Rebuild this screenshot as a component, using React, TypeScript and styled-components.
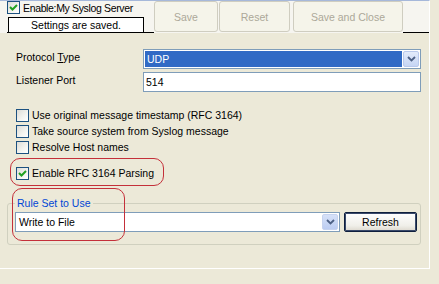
import React from 'react';
import styled, { createGlobalStyle } from 'styled-components';

const GlobalStyle = createGlobalStyle`
  html, body {
    margin: 0;
    background: #ece9d8;
    font-family: "Liberation Sans", Arial, sans-serif;
    font-size: 10.5px;
    color: #000;
  }
`;

const Panel = styled.div`
  width: 430px;
  height: 269px;
  box-sizing: border-box;
  border-top: 1px solid #a6b8da;
  border-right: 1px solid #fff;
  border-bottom: 1px solid #fff;
  display: flex;
  flex-direction: column;
`;

const Header = styled.div`
  display: flex;
  align-items: flex-start;
  height: 32px;
  background: #f6f5f0;
`;

const HeaderLeft = styled.div`
  margin-left: 7px;
  width: 147px;
  height: 32px;
  box-sizing: border-box;
  border-bottom: 1px solid #000;
`;

const HeaderFill = styled.div`
  flex: 1;
  height: 32px;
  box-sizing: border-box;
  border-bottom: 1px solid #000;
`;

const StatusBox = styled.div`
  margin: 3px 0 0 1px;
  width: 136px;
  height: 15px;
  box-sizing: border-box;
  border: 1px solid #000;
  border-bottom: none;
  background: #fff;
  text-align: center;
  line-height: 14px;
`;

const ToolButton = styled.button<{ $w: number; $gap: number }>`
  width: ${p => p.$w}px;
  height: 31px;
  margin-left: ${p => p.$gap}px;
  padding: 0;
  box-sizing: border-box;
  border: 1px solid #cfcdc0;
  border-radius: 3px;
  background: #f5f4ea;
  color: #aca899;
  font-family: inherit;
  font-size: 10.5px;
  font-weight: normal;
`;

const CheckRow = styled.label`
  display: flex;
  align-items: center;
  gap: 3px;
  height: 16px;
  white-space: nowrap;
`;

const TopCheckRow = styled(CheckRow)`
  height: 13px;
  letter-spacing: -0.35px;
`;

const Box = styled.span`
  width: 13px;
  height: 13px;
  flex: none;
  box-sizing: border-box;
  border: 1px solid #1c5180;
  background: linear-gradient(135deg, #dcdcd7 0%, #f4f4f0 60%, #ffffff 100%);
  display: flex;
  align-items: center;
  justify-content: center;
`;

const Body = styled.div`
  padding: 16px 0 0 16px;
  display: flex;
  flex-direction: column;
`;

const FieldGrid = styled.div`
  display: grid;
  grid-template-columns: 127px 278px;
  row-gap: 3px;
`;

const FieldLabel = styled.div`
  line-height: 16px;
`;

const SelectBox = styled.div<{ $w?: number }>`
  display: flex;
  width: ${p => (p.$w ? `${p.$w}px` : 'auto')};
  height: 20px;
  box-sizing: border-box;
  border: 1px solid #7f9db9;
  padding: 1px;
  background: #fff;
`;

const SelectValue = styled.div<{ $active?: boolean }>`
  flex: 1;
  padding-left: 2px;
  line-height: 16px;
  background: ${p => (p.$active ? '#316ac5' : '#fff')};
  color: ${p => (p.$active ? '#fff' : '#000')};
`;

const ArrowButton = styled.span<{ $pale?: boolean }>`
  width: 16px;
  flex: none;
  box-sizing: border-box;
  margin-left: 1px;
  border: 1px solid ${p => (p.$pale ? '#c6d3ef' : '#b9c9ec')};
  border-radius: 2px;
  background: ${p =>
    p.$pale
      ? 'linear-gradient(#d6e1f8, #bccdf2)'
      : 'linear-gradient(#e3ebfb, #c6d5f4)'};
  display: flex;
  align-items: center;
  justify-content: center;
`;

const TextInput = styled.div`
  height: 20px;
  box-sizing: border-box;
  border: 1px solid #7f9db9;
  background: #fff;
  padding-left: 2px;
  line-height: 18px;
`;

const CheckList = styled.div`
  margin-top: 15px;
  display: flex;
  flex-direction: column;
`;

const Highlight = styled.div`
  margin: 3px 0 0 -6px;
  width: 154px;
  height: 28px;
  box-sizing: border-box;
  border: 1px solid #c4303a;
  border-radius: 10px;
  padding: 2px 0 0 5px;
  display: flex;
  align-items: center;
`;

const GroupWrap = styled.div`
  position: relative;
  margin: 11px 0 0 -9px;
  width: 414px;
`;

const Group = styled.fieldset`
  margin: 0;
  padding: 0 3px 12px 7px;
  border: 1px solid #d0d0bf;
  border-radius: 3px;
  min-width: 0;
`;

const GroupTitle = styled.legend`
  padding: 0 2px;
  line-height: 13px;
  color: #0046d5;
`;

const GroupRow = styled.div`
  display: flex;
  gap: 4px;
  margin-top: 2px;
`;

const DefaultButton = styled.button`
  width: 73px;
  height: 20px;
  padding: 0;
  box-sizing: border-box;
  border: 1px solid #0f1f3d;
  border-radius: 2px;
  box-shadow: inset 0 0 0 1px #3a4a6b;
  background: linear-gradient(#ffffff, #f0efe9 70%, #dcd8cd);
  font-family: inherit;
  font-size: 10.5px;
  font-weight: normal;
  color: #000;
`;

const Annotation = styled.div`
  position: absolute;
  left: 5px;
  top: -9px;
  width: 113px;
  height: 53px;
  box-sizing: border-box;
  border: 1px solid #c4303a;
  border-radius: 10px;
  pointer-events: none;
`;

const Checkbox = ({ checked }: { checked?: boolean }) => (
  <Box>
    {checked && (
      <svg width="9" height="9" viewBox="0 0 9 9">
        <polyline points="1,4 3.5,6.5 8,2" fill="none" stroke="#21a121" strokeWidth="2" />
      </svg>
    )}
  </Box>
);

const Chevron = () => (
  <svg width="9" height="6" viewBox="0 0 9 6">
    <polyline points="1,1 4.5,4.5 8,1" fill="none" stroke="#4d6185" strokeWidth="1.8" />
  </svg>
);

const App = () => {
  const options = [
    'Use original message timestamp (RFC 3164)',
    'Take source system from Syslog message',
    'Resolve Host names',
  ];

  return (
    <>
      <GlobalStyle />
      <Panel>
        <Header>
          <HeaderLeft>
            <TopCheckRow>
              <Checkbox checked />
              <span>Enable:My Syslog Server</span>
            </TopCheckRow>
            <StatusBox>Settings are saved.</StatusBox>
          </HeaderLeft>
          <ToolButton $w={64} $gap={0}>Save</ToolButton>
          <ToolButton $w={71} $gap={1}>Reset</ToolButton>
          <ToolButton $w={110} $gap={3}>Save and Close</ToolButton>
          <HeaderFill />
        </Header>

        <Body>
          <FieldGrid>
            <FieldLabel>
              Protocol <u>T</u>ype
            </FieldLabel>
            <SelectBox>
              <SelectValue $active>UDP</SelectValue>
              <ArrowButton>
                <Chevron />
              </ArrowButton>
            </SelectBox>
            <FieldLabel>Listener Port</FieldLabel>
            <TextInput>514</TextInput>
          </FieldGrid>

          <CheckList>
            {options.map(o => (
              <CheckRow key={o}>
                <Checkbox />
                <span>{o}</span>
              </CheckRow>
            ))}
          </CheckList>

          <Highlight>
            <CheckRow>
              <Checkbox checked />
              <span>Enable RFC 3164 Parsing</span>
            </CheckRow>
          </Highlight>

          <GroupWrap>
            <Group>
              <GroupTitle>Rule Set to Use</GroupTitle>
              <GroupRow>
                <SelectBox $w={325}>
                  <SelectValue>Write to File</SelectValue>
                  <ArrowButton $pale>
                    <Chevron />
                  </ArrowButton>
                </SelectBox>
                <DefaultButton>Refresh</DefaultButton>
              </GroupRow>
            </Group>
            <Annotation />
          </GroupWrap>
        </Body>
      </Panel>
    </>
  );
};

export default App;
